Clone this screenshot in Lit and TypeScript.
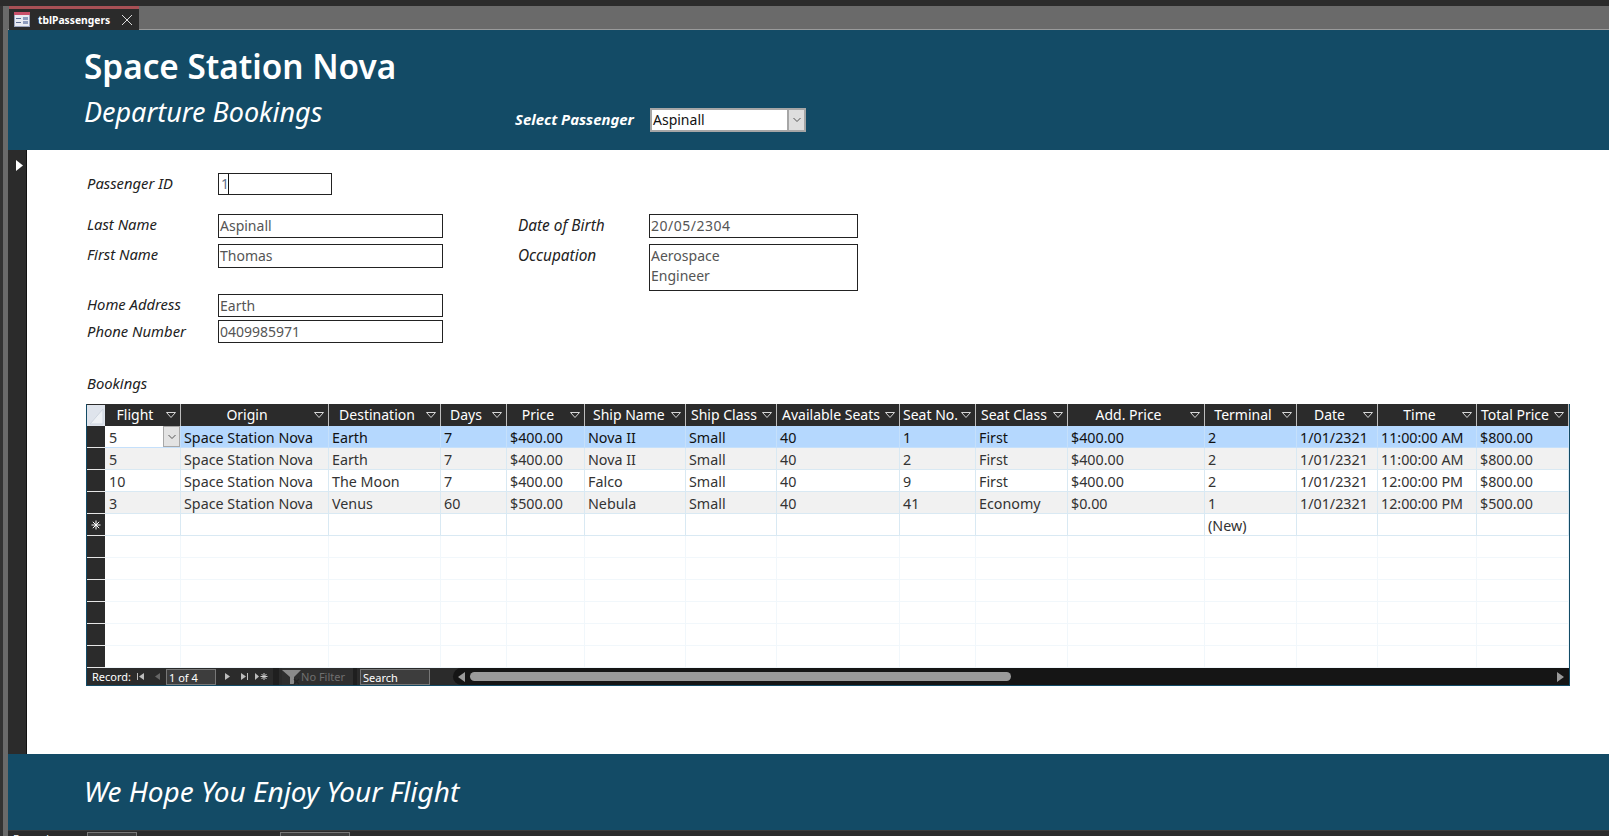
import { LitElement, html, css, svg } from 'lit';
import { customElement } from 'lit/decorators.js';

// column widths come from the datasheet in the reference, pad is the header text inset
const COLUMNS = [
  { name: 'Flight', width: 76, pad: 0 },
  { name: 'Origin', width: 148, pad: 0 },
  { name: 'Destination', width: 112, pad: 0 },
  { name: 'Days', width: 66, pad: 0 },
  { name: 'Price', width: 78, pad: 0 },
  { name: 'Ship Name', width: 101, pad: 8 },
  { name: 'Ship Class', width: 91, pad: 5 },
  { name: 'Available Seats', width: 123, pad: 5 },
  { name: 'Seat No.', width: 76, pad: 3 },
  { name: 'Seat Class', width: 92, pad: 5 },
  { name: 'Add. Price', width: 137, pad: 0 },
  { name: 'Terminal', width: 92, pad: 0 },
  { name: 'Date', width: 81, pad: 0 },
  { name: 'Time', width: 99, pad: 0 },
  { name: 'Total Price', width: 92, pad: 4 },
];

const ROWS = [
  ['5', 'Space Station Nova', 'Earth', '7', '$400.00', 'Nova II', 'Small', '40', '1', 'First', '$400.00', '2', '1/01/2321', '11:00:00 AM', '$800.00'],
  ['5', 'Space Station Nova', 'Earth', '7', '$400.00', 'Nova II', 'Small', '40', '2', 'First', '$400.00', '2', '1/01/2321', '11:00:00 AM', '$800.00'],
  ['10', 'Space Station Nova', 'The Moon', '7', '$400.00', 'Falco', 'Small', '40', '9', 'First', '$400.00', '2', '1/01/2321', '12:00:00 PM', '$800.00'],
  ['3', 'Space Station Nova', 'Venus', '60', '$500.00', 'Nebula', 'Small', '40', '41', 'Economy', '$0.00', '1', '1/01/2321', '12:00:00 PM', '$500.00'],
];

const NEW_ROW = COLUMNS.map((_, i) => (i === 11 ? '(New)' : ''));
const EMPTY_ROW = COLUMNS.map(() => '');
const EMPTY_COUNT = 6;

const gridTemplate = COLUMNS.map((c) => `${c.width}px`).join(' ');

const chevron = svg`<path d="M1.5 3 L5 6.5 L8.5 3" fill="none" stroke="#555" stroke-width="1"/>`;
const asterisk = svg`<path d="M5 0.5 V9.5 M0.5 5 H9.5 M1.8 1.8 L8.2 8.2 M8.2 1.8 L1.8 8.2" stroke="#fff" stroke-width="1" fill="none"/>`;

@customElement('app-root')
export class AppRoot extends LitElement {
  static styles = css`
    :host {
      display: block;
      width: 1609px;
      height: 836px;
      overflow: hidden;
      background: #2b2b2b;
      font-family: 'Noto Sans', 'Open Sans', sans-serif;
    }
    .top { height: 6px; background: #2b2b2b; }
    .shell { display: flex; height: 830px; }
    .rail { width: 8px; flex: none; background: #333; border-right: 5px solid #6a6a6a; box-sizing: border-box; }
    .main { flex: 1; display: flex; flex-direction: column; min-width: 0; }

    .tabs { height: 24px; flex: none; display: flex; background: #6a6a6a; border-bottom: 1px solid #9a9a9a; box-sizing: border-box; padding-left: 1px; }
    .tab {
      width: 130px; display: flex; align-items: center; background: #2b2b2b;
      border-top: 3px solid #a85055; box-sizing: border-box; height: 24px;
      color: #fff; font-size: 10.3px; font-weight: 700; padding-left: 5px;
    }
    .tab svg { flex: none; }
    .tab .name { margin-left: 8px; flex: 1; }
    .tab .close { margin-right: 6px; }

    .header { height: 120px; flex: none; background: #134b66; color: #fff; display: flex; padding-left: 76px; box-sizing: border-box; }
    .titles { width: 431px; flex: none; padding-top: 14px; }
    h1 { margin: 0; font-size: 33.3px; line-height: 44px; font-weight: 600; }
    h2 { margin: 4px 0 0; font-size: 27px; line-height: 40px; font-weight: 400; font-style: italic; }
    .picker { display: flex; align-items: center; margin-top: 78px; height: 24px; }
    .picker label { width: 135px; font-size: 14.9px; font-weight: 700; font-style: italic; padding-bottom: 3px; }
    .combo { width: 156px; height: 24px; box-sizing: border-box; background: #fff; border: 2px solid #a6a6a6; display: flex; color: #111; font-size: 14px; }
    .combo span { flex: 1; padding-left: 1px; line-height: 20px; }
    .combo i { width: 15px; background: #dedede; border-left: 2px solid #a6a6a6; display: flex; align-items: center; justify-content: center; }

    .middle { flex: none; height: 604px; display: flex; background: #fff; }
    .selector { width: 19px; flex: none; background: #2b2b2b; border-right: 1px solid #111; box-sizing: border-box; padding: 4px 0 0 8px; }
    .content { flex: 1; padding: 23px 0 0 59px; min-width: 0; }

    .row { display: flex; }
    .label { font-size: 14.8px; font-style: italic; color: #222; width: 132px; flex: none; line-height: 20px; padding-left: 1px; box-sizing: border-box; }
    .label.lower { padding-top: 1px; }
    .box { box-sizing: border-box; border: 1px solid #222; height: 24px; padding: 0 1px; font-size: 14px; line-height: 22px; color: #555; background: #fff; }
    .box.wide { width: 225px; }
    .box.short { height: 23px; }
    .box.date { width: 209px; }
    .box.spaced { letter-spacing: 0.5px; }
    .box.id { width: 114px; height: 22px; line-height: 20px; position: relative; padding-left: 2px; color: #5d6f88; }
    .caret { position: absolute; left: 9px; top: 0; bottom: 0; width: 1px; background: #111; }
    .gap { width: 73px; flex: none; }
    .label.label2 { width: 133px; font-size: 15.4px; padding-left: 2px; line-height: 24px; }
    .box.occupation { height: 47px; line-height: 20px; padding-top: 1px; }
    .first { margin-top: 19px; }
    .second { margin-top: 6px; height: 50px; }
    .phone { margin-top: 3px; }

    .bookings { font-size: 14.8px; font-style: italic; color: #222; margin: 30px 0 0 1px; line-height: 20px; }

    .sheet { width: 1482px; margin-top: 11px; border: 1px solid #134b66; border-width: 0 1px 1px 1px; box-sizing: content-box; background: #fff; }
    .line { display: flex; height: 22px; }
    .corner { width: 18px; flex: none; background: #dfe4ec; box-sizing: border-box; border-top: 1px solid #2b2b2b; }
    .rowhead { width: 18px; flex: none; background: #2b2b2b; box-sizing: border-box; border-bottom: 1px solid #e6e6e6; display: flex; align-items: center; justify-content: center; }
    .cols { display: grid; flex: none; }
    .head { background: #2b2b2b; color: #fff; font-size: 14px; box-sizing: border-box; border-right: 1px solid #bdbdbd; display: flex; align-items: center; position: relative; padding: 0 18px 2px 3px; white-space: nowrap; justify-content: center; }
    .head.left { justify-content: flex-start; }
    .head svg { position: absolute; right: 3px; top: 7px; }
    .cell { box-sizing: border-box; font-size: 14.3px; line-height: 23px; color: #333; padding-left: 3px; border-right: 1px solid #d9e9f3; border-bottom: 1px solid #d9e9f3; white-space: nowrap; overflow: hidden; position: relative; }
    .cell:first-child { padding-left: 4px; }
    .current .cell { background: #b5d8fe; color: #111; border-color: #c5e0fb; }
    .current .cell:first-child { background: #fff; color: #333; }
    .alt .cell { background: #f1f1f1; }
    .blank .cell { border-color: #f1f7fb; }
    .drop { position: absolute; right: 0; top: 0; width: 17px; height: 21px; box-sizing: border-box; background: #e3e3e3; border: 1px solid #a8a8a8; display: flex; align-items: center; justify-content: center; }

    .status { display: flex; height: 17px; background: #2b2b2b; color: #fff; font-size: 11px; align-items: center; }
    .nav { display: flex; align-items: center; width: 366px; flex: none; height: 17px; padding-left: 5px; box-sizing: border-box; }
    .nav svg { flex: none; }
    .m5 { margin-left: 5px; }
    .m8 { margin-left: 8px; }
    .m7 { margin-left: 7px; }
    .m6 { margin-left: 6px; }
    .recbox { width: 50px; height: 16px; margin-left: 4px; flex: none; box-sizing: border-box; border: 1px solid #777; background: #3d3d3d; line-height: 15px; padding-left: 2px; }
    .sep { width: 6px; height: 17px; background: #1f1f1f; margin: 0 3px 0 4px; flex: none; }
    .filtered { display: flex; align-items: center; background: #2f2f2f; height: 17px; }
    .nofilter { color: #6f6f6f; width: 52px; flex: none; }
    .sep2 { width: 4px; height: 17px; background: #1f1f1f; margin-right: 3px; flex: none; }
    .search { width: 70px; height: 16px; flex: none; box-sizing: border-box; border: 1px solid #777; background: #3d3d3d; line-height: 15px; padding-left: 2px; }
    .scroll { flex: 1; height: 17px; background: #151515; display: flex; align-items: center; border-radius: 9px 0 0 9px; padding: 0 5px; }
    .thumb { width: 541px; height: 9px; background: #9a9a9a; border-radius: 5px; margin: 0 auto 0 5px; }

    .footer { height: 76px; flex: none; background: #134b66; color: #fff; display: flex; align-items: center; padding: 0 0 2px 76px; box-sizing: border-box; font-size: 28px; font-style: italic; }
    .bottom { flex: 1; min-height: 0; overflow: hidden; background: #2b2b2b; border-top: 1px solid #3a3a3a; display: flex; color: #fff; font-size: 11px; line-height: 14px; padding: 1px 0 0 5px; }
    .bottom .rec { width: 74px; flex: none; }
    .bottom .box2 { width: 50px; flex: none; height: 16px; box-sizing: border-box; border: 1px solid #777; background: #3d3d3d; padding-left: 2px; }
    .bottom .arrows { width: 65px; flex: none; }
    .bottom .funnel { width: 78px; flex: none; }
    .bottom .box3 { width: 70px; flex: none; height: 16px; box-sizing: border-box; border: 1px solid #777; background: #3d3d3d; padding-left: 2px; }
  `;

  renderIcon() {
    return html`<svg width="16" height="15" viewBox="0 0 16 15">
      <rect x="0.5" y="0.5" width="15" height="14" fill="#e8eaf2" stroke="#9aa3bd"/>
      <rect x="0" y="0" width="16" height="3" fill="#c9506a"/>
      <rect x="2" y="6" width="5" height="1" fill="#5a6a90"/>
      <rect x="2" y="10" width="5" height="1" fill="#5a6a90"/>
      <rect x="9" y="5" width="5" height="3" fill="#8d9bbd"/>
      <rect x="9" y="9" width="5" height="3" fill="#8d9bbd"/>
    </svg>`;
  }

  renderFilterArrow() {
    return html`<svg width="12" height="8" viewBox="0 0 12 8">
      <path d="M1.5 1.5 H10.5 L6 6.5 Z" fill="none" stroke="#d8d8d8" stroke-width="1"/>
    </svg>`;
  }

  renderArrow(d: string, cls: string, color = '#bdbdbd') {
    return html`<svg class=${cls} width="9" height="9" viewBox="0 0 9 9"><path d=${d} fill=${color}/></svg>`;
  }

  renderDataRow(cells: string[], cls: string, star = false) {
    return html`<div class="line ${cls}">
      <div class="rowhead">${star ? html`<svg width="10" height="10" viewBox="0 0 10 10">${asterisk}</svg>` : ''}</div>
      <div class="cols" style="grid-template-columns:${gridTemplate}">
        ${cells.map(
          (text, i) => html`<div class="cell">${text}${cls === 'current' && i === 0
            ? html`<span class="drop"><svg width="10" height="10" viewBox="0 0 10 10">${chevron}</svg></span>`
            : ''}</div>`
        )}
      </div>
    </div>`;
  }

  render() {
    return html`
      <div class="top"></div>
      <div class="shell">
        <div class="rail"></div>
        <div class="main">
          <div class="tabs">
            <div class="tab">
              ${this.renderIcon()}
              <span class="name">tblPassengers</span>
              <svg class="close" width="12" height="12" viewBox="0 0 12 12"><path d="M1 1 L11 11 M11 1 L1 11" stroke="#ddd" stroke-width="1"/></svg>
            </div>
          </div>

          <div class="header">
            <div class="titles">
              <h1>Space Station Nova</h1>
              <h2>Departure Bookings</h2>
            </div>
            <div class="picker">
              <label>Select Passenger</label>
              <div class="combo"><span>Aspinall</span><i><svg width="10" height="10" viewBox="0 0 10 10">${chevron}</svg></i></div>
            </div>
          </div>

          <div class="middle">
            <div class="selector"><svg width="7" height="11" viewBox="0 0 7 11"><path d="M0 0 L7 5.5 L0 11 Z" fill="#fff"/></svg></div>
            <div class="content">
              <div class="row">
                <div class="label">Passenger ID</div>
                <div class="box id">1<span class="caret"></span></div>
              </div>
              <div class="row first">
                <div class="label">Last Name</div>
                <div class="box wide">Aspinall</div>
                <div class="gap"></div>
                <div class="label label2">Date of Birth</div>
                <div class="box date spaced">20/05/2304</div>
              </div>
              <div class="row second">
                <div class="label">First Name</div>
                <div class="box wide">Thomas</div>
                <div class="gap"></div>
                <div class="label label2">Occupation</div>
                <div class="box date occupation">Aerospace<br />Engineer</div>
              </div>
              <div class="row">
                <div class="label">Home Address</div>
                <div class="box wide short">Earth</div>
              </div>
              <div class="row phone">
                <div class="label lower">Phone Number</div>
                <div class="box wide short">0409985971</div>
              </div>

              <div class="bookings">Bookings</div>

              <div class="sheet">
                <div class="line">
                  <div class="corner"><svg width="18" height="21" viewBox="0 0 18 21"><path d="M3 19 L16 4 V19 Z" fill="#eef1f5" stroke="#cfd6e0" stroke-width="1"/></svg></div>
                  <div class="cols" style="grid-template-columns:${gridTemplate}">
                    ${COLUMNS.map(
                      (c) => html`<div class="head ${c.pad ? 'left' : ''}" style=${c.pad ? `padding-left:${c.pad}px` : ''}>${c.name}${this.renderFilterArrow()}</div>`
                    )}
                  </div>
                </div>
                ${ROWS.map((r, i) => this.renderDataRow(r, i === 0 ? 'current' : i % 2 ? 'alt' : ''))}
                ${this.renderDataRow(NEW_ROW, '', true)}
                ${Array.from({ length: EMPTY_COUNT }, () => this.renderDataRow(EMPTY_ROW, 'blank'))}
                <div class="status">
                  <div class="nav">
                    <span>Record:</span>
                    ${this.renderArrow('M1 1 H2 V8 H1 Z M8 1 V8 L3 4.5 Z', 'm5')}
                    ${this.renderArrow('M7 1 V8 L2 4.5 Z', 'm8', '#666')}
                    <span class="recbox">1 of 4</span>
                    ${this.renderArrow('M2 1 V8 L7 4.5 Z', 'm7')}
                    ${this.renderArrow('M1 1 V8 L6 4.5 Z M7 1 H8 V8 H7 Z', 'm8')}
                    <svg class="m6" width="14" height="9" viewBox="0 0 14 9">
                      <path d="M0 1 V8 L4 4.5 Z" fill="#bdbdbd"/>
                      <path d="M9 1 V8 M5.5 4.5 H12.5 M6.5 2 L11.5 7 M11.5 2 L6.5 7" stroke="#d0d0d0" stroke-width="1" fill="none"/>
                    </svg>
                    <span class="sep"></span>
                    <span class="filtered">
                      <svg width="19" height="16" viewBox="0 0 19 16">
                        <path d="M0 1 H19 L12 8 V15 L8 15 V8 Z" fill="#8a8a8a"/>
                        <path d="M12 10 L17 15 M17 10 L12 15" stroke="#222" stroke-width="1.2"/>
                      </svg>
                      <span class="nofilter">No Filter</span>
                    </span>
                    <span class="sep2"></span>
                    <span class="search">Search</span>
                  </div>
                  <div class="scroll">
                    <svg width="7" height="10" viewBox="0 0 7 10"><path d="M7 0 V10 L0 5 Z" fill="#9a9a9a"/></svg>
                    <div class="thumb"></div>
                    <svg width="7" height="10" viewBox="0 0 7 10"><path d="M0 0 V10 L7 5 Z" fill="#9a9a9a"/></svg>
                  </div>
                </div>
              </div>
            </div>
          </div>

          <div class="footer">We Hope You Enjoy Your Flight</div>
          <div class="bottom">
            <span class="rec">Record:</span>
            <span class="box2">1 of 12</span>
            <span class="arrows"></span>
            <span class="funnel"><svg width="16" height="5" viewBox="0 0 16 5"><path d="M0 0 H16 L12 5 H4 Z" fill="#8a8a8a"/></svg></span>
            <span class="box3">Search</span>
          </div>
        </div>
      </div>
    `;
  }
}
